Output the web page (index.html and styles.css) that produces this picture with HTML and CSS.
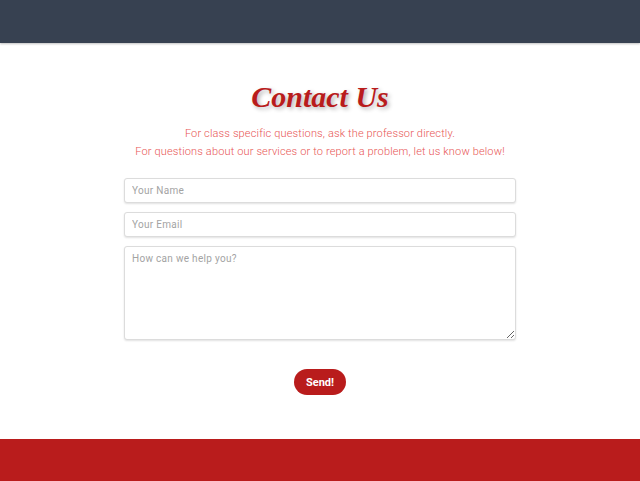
FILE: index.html
```html
<!DOCTYPE html>
<html>
<head>
<meta charset="utf-8">
<link rel="stylesheet" href="styles.css">
</head>
<body>
<header class="topbar"></header>
<main class="content">
  <h1 class="title">Contact Us</h1>
  <p class="intro">For class specific questions, ask the professor directly.<br>For questions about our services or to report a problem, let us know below!</p>
  <form class="form">
    <input class="field" type="text" placeholder="Your Name">
    <input class="field" type="email" placeholder="Your Email">
    <textarea class="field area" placeholder="How can we help you?"></textarea>
    <button class="send" type="button">Send!</button>
  </form>
</main>
<footer class="bottombar"></footer>
</body>
</html>
```
FILE: styles.css
```css
* { box-sizing: border-box; }
html, body { margin: 0; padding: 0; }
body {
  width: 640px;
  height: 481px;
  display: flex;
  flex-direction: column;
  background: #ffffff;
  font-family: "Roboto", "Liberation Sans", sans-serif;
  overflow: hidden;
}
.topbar {
  height: 43px;
  background: #374151;
  box-shadow: 0 1px 2px rgba(0,0,0,0.25);
  flex: none;
}
.content {
  flex: 1;
  display: flex;
  flex-direction: column;
  align-items: center;
  padding-top: 36px;
}
.title {
  margin: 0;
  font-family: "Liberation Serif", serif;
  font-style: italic;
  font-weight: 700;
  font-size: 30px;
  line-height: 36px;
  color: #b91c1c;
  text-shadow: 2px 2px 4px rgba(0,0,0,0.3);
}
.intro {
  margin: 10px 0 0;
  text-align: center;
  color: #e85555;
  font-size: 11px;
  line-height: 18px;
  letter-spacing: 0.15px;
  font-weight: 300;
}
.form {
  width: 392px;
  margin-top: 17px;
  display: flex;
  flex-direction: column;
  gap: 9px;
}
.field {
  display: block;
  width: 100%;
  height: 25px;
  border: 1px solid #dcdcdc;
  border-radius: 3px;
  box-shadow: 0 1px 2px rgba(0,0,0,0.12);
  padding: 0 7px;
  font-family: "Roboto", "Liberation Sans", sans-serif;
  font-size: 10px;
  letter-spacing: 0.3px;
  color: #333;
  background: #fff;
}
.field::placeholder { color: #a3a3a3; }
.area {
  height: 94px;
  padding: 6px 7px;
  resize: vertical;
}
.send {
  align-self: center;
  margin-top: 20px;
  width: 52px;
  height: 26px;
  border: none;
  border-radius: 13px;
  background: #b91c1c;
  color: #fff;
  font-family: "Roboto", "Liberation Sans", sans-serif;
  font-weight: 700;
  font-size: 11px;
  padding: 0;
}
.bottombar {
  height: 42px;
  background: #b91c1c;
  flex: none;
}
```
